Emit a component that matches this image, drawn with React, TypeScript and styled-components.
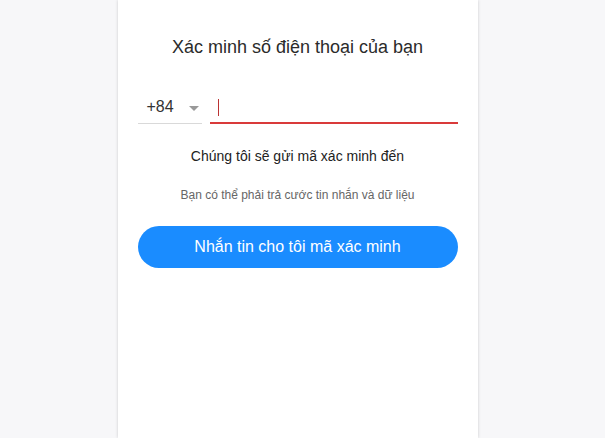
import React from "react";
import styled, { createGlobalStyle } from "styled-components";

const Global = createGlobalStyle`
  html, body { margin: 0; padding: 0; height: 100%; }
  body { background: #f7f7f9; font-family: "Liberation Sans", Arial, sans-serif; }
  #root { height: 100%; }
`;

const Page = styled.div`
  height: 438px;
  display: flex;
  justify-content: center;
  overflow: hidden;
  padding-right: 10px;
  box-sizing: border-box;
`;

const Card = styled.div`
  width: 360px;
  height: 100%;
  background: #ffffff;
  box-shadow: 0 0 3px rgba(0, 0, 0, 0.18);
  box-sizing: border-box;
  padding: 36px 20px 0;
  display: flex;
  flex-direction: column;
  align-items: stretch;
`;

const Title = styled.h1`
  margin: 0;
  font-size: 18px;
  font-weight: normal;
  color: #2b2b2b;
  text-align: center;
  line-height: 22px;
`;

const PhoneRow = styled.div`
  margin-top: 40px;
  display: flex;
  align-items: flex-end;
  gap: 8px;
  height: 26px;
`;

const CountrySelect = styled.div`
  width: 64px;
  height: 100%;
  box-sizing: border-box;
  border-bottom: 1px solid #d9d9d9;
  display: flex;
  align-items: flex-start;
  justify-content: space-between;
  padding: 0 3px 0 9px;
  font-size: 16px;
  color: #333;
  line-height: 18px;
`;

const Arrow = styled.span`
  margin-top: 8px;
  width: 0;
  height: 0;
  border-left: 5px solid transparent;
  border-right: 5px solid transparent;
  border-top: 5px solid #999;
`;

const InputWrap = styled.div`
  flex: 1;
  height: 100%;
  border-bottom: 2px solid #d93a3a;
  box-sizing: border-box;
  padding-left: 8px;
  display: flex;
  align-items: flex-start;
`;

const Caret = styled.span`
  width: 1px;
  height: 17px;
  background: #b33;
  margin-top: 1px;
`;

const Info = styled.p`
  margin: 24px 0 0;
  text-align: center;
  font-size: 14px;
  color: #222;
  line-height: 16px;
`;

const Note = styled.p`
  margin: 24px 0 0;
  text-align: center;
  font-size: 12px;
  color: #666;
  line-height: 14px;
`;

const SendButton = styled.button`
  margin-top: 24px;
  height: 42px;
  border: none;
  border-radius: 21px;
  background: #1a8cff;
  color: #fff;
  font-family: "Liberation Sans", Arial, sans-serif;
  font-size: 16px;
  cursor: pointer;
`;

export default function App() {
  return (
    <>
      <Global />
      <Page>
        <Card>
          <Title>Xác minh số điện thoại của bạn</Title>
          <PhoneRow>
            <CountrySelect>
              <span>+84</span>
              <Arrow />
            </CountrySelect>
            <InputWrap>
              <Caret />
            </InputWrap>
          </PhoneRow>
          <Info>Chúng tôi sẽ gửi mã xác minh đến</Info>
          <Note>Bạn có thể phải trả cước tin nhắn và dữ liệu</Note>
          <SendButton>Nhắn tin cho tôi mã xác minh</SendButton>
        </Card>
      </Page>
    </>
  );
}
